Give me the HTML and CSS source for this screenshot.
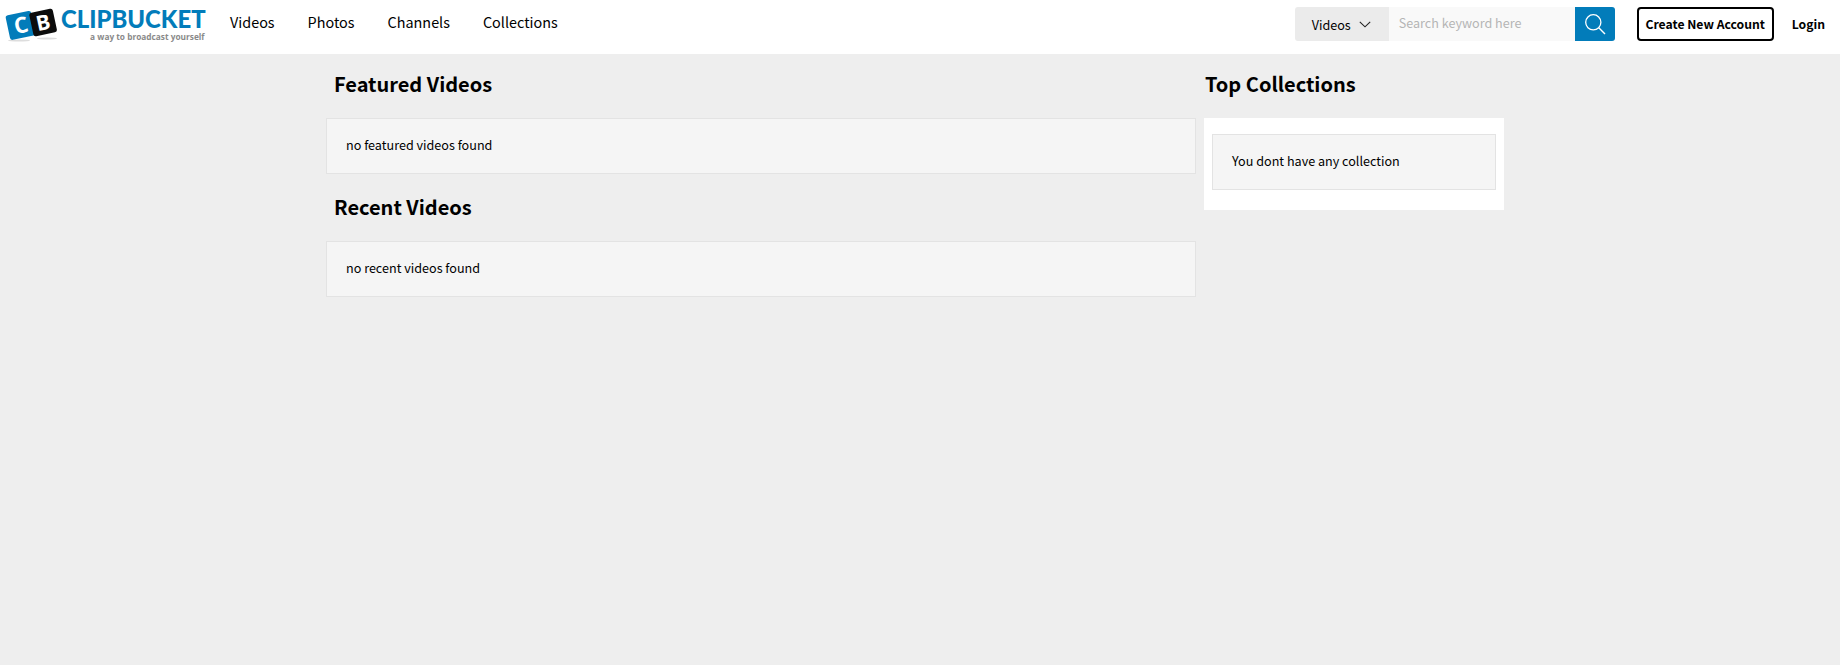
FILE: index.html
```html
<!DOCTYPE html>
<html lang="en">
<head>
<meta charset="utf-8">
<title>ClipBucket</title>
<link rel="stylesheet" href="styles.css">
</head>
<body>
<header class="topbar">
  <a class="logo" href="#">
    <svg class="logo-mark" viewBox="0 0 52 36" width="52" height="36" aria-hidden="true">
      <ellipse cx="14" cy="33.5" rx="11" ry="1" fill="#ddd"/>
      <ellipse cx="42" cy="31.5" rx="10" ry="1" fill="#ddd"/>
      <rect x="2.5" y="6" width="26" height="25" rx="2.5" fill="#027cba" transform="rotate(-12 15 18)"/>
      <rect x="26" y="3.5" width="24" height="24" rx="2.5" fill="#0c0c0c" transform="rotate(-12 38 15)"/>
      <text x="16" y="26" class="mark-letter mark-c" text-anchor="middle" transform="rotate(-12 16 18)">C</text>
      <text x="38" y="23" class="mark-letter mark-b" text-anchor="middle" transform="rotate(-12 38 15)">B</text>
    </svg>
    <span class="logo-text">
      <span class="logo-name">CLIPBUCKET</span>
      <span class="logo-tag">a way to broadcast yourself</span>
    </span>
  </a>
  <nav class="nav">
    <a href="#">Videos</a>
    <a href="#">Photos</a>
    <a href="#">Channels</a>
    <a href="#">Collections</a>
  </nav>
  <form class="search">
    <div class="search-type">
      <span>Videos</span>
      <svg viewBox="0 0 12 7" width="12" height="7" aria-hidden="true"><path d="M.8.8 6 5.8 11.2.8" fill="none" stroke="#222" stroke-width="1.1"/></svg>
    </div>
    <div class="search-input">Search keyword here</div>
    <button class="search-btn" type="button" aria-label="Search">
      <svg viewBox="0 0 22 22" width="22" height="22" aria-hidden="true"><circle cx="9.3" cy="9.3" r="7.6" fill="none" stroke="#fff" stroke-width="1.3"/><path d="M14.8 14.8 21 21" fill="none" stroke="#fff" stroke-width="1.4"/></svg>
    </button>
  </form>
  <a class="btn-create" href="#">Create New Account</a>
  <a class="login" href="#">Login</a>
</header>
<main class="page">
  <section class="col-main">
    <h2>Featured Videos</h2>
    <div class="notice">no featured videos found</div>
    <h2 class="next">Recent Videos</h2>
    <div class="notice">no recent videos found</div>
  </section>
  <aside class="col-side">
    <h2>Top Collections</h2>
    <div class="side-card">
      <div class="notice">You dont have any collection</div>
    </div>
  </aside>
</main>
</body>
</html>
```

FILE: styles.css
```css
* { box-sizing: border-box; }
html, body { margin: 0; height: 100%; }
body {
  background: #eee;
  color: #000;
  font-family: "Noto Sans CJK JP", "Noto Sans", sans-serif;
  font-size: 12.6px;
}
a { color: inherit; text-decoration: none; }

.topbar {
  display: flex;
  align-items: center;
  height: 54px;
  background: #fff;
  padding: 0 15px 0 5px;
}
.logo { display: flex; align-items: flex-start; width: 225px; height: 36px; margin-bottom: 4px; }
.logo-mark { flex: none; }
.logo-text { display: flex; flex-direction: column; align-items: flex-end; margin-left: 4px; }
.logo-name {
  font-family: "Lato", sans-serif;
  font-weight: 900;
  font-size: 23.9px;
  line-height: 24px;
  color: #027cba;
}
.logo-tag {
  font-family: "Open Sans", sans-serif;
  font-weight: 700;
  font-size: 8.3px;
  line-height: 11px;
  margin-right: 1px;
  color: #8a8a8a;
}
.mark-letter { font-family: "Open Sans", sans-serif; font-weight: 700; fill: #fff; }
.mark-c { font-size: 22px; }
.mark-b { font-size: 21px; }

.nav { display: flex; gap: 33px; font-size: 14.4px; line-height: 24px; margin-bottom: 10px; }

.search {
  display: flex;
  height: 34px;
  margin-left: auto;
  margin-bottom: 6px;
  border-radius: 3px;
  overflow: hidden;
}
.search-type {
  display: flex;
  align-items: center;
  gap: 8px;
  width: 94px;
  padding-left: 17px;
  background: #ebebeb;
}
.search-input {
  display: flex;
  align-items: center;
  width: 186px;
  padding: 0 0 3px 10px;
  background: #f9f9f9;
  color: #b5b5b5;
}
.search-btn {
  display: flex;
  align-items: center;
  justify-content: center;
  width: 40px;
  border: 0;
  padding: 0;
  background: #027cba;
}
.btn-create {
  display: flex;
  align-items: center;
  justify-content: center;
  width: 137px;
  height: 34px;
  margin: 0 0 6px 22px;
  border: 2px solid #000;
  border-radius: 4px;
  font-size: 12.2px;
  font-weight: 700;
}
.login { margin: 0 0 6px 18px; font-size: 12.2px; font-weight: 700; }

.page {
  display: grid;
  grid-template-columns: 870px 300px;
  column-gap: 8px;
  width: 1188px;
  margin: 0 auto;
  padding-top: 15px;
}
h2 {
  margin: 0;
  padding-left: 8px;
  font-size: 20px;
  font-weight: 700;
  line-height: 30px;
  height: 49px;
}
.col-side h2 { padding-left: 1px; }
h2.next { margin-top: 18px; }
.notice {
  height: 56px;
  padding: 0 19px 3px;
  display: flex;
  align-items: center;
  background: #f5f5f5;
  border: 1px solid #e3e3e3;
}
.side-card {
  background: #fff;
  padding: 16px 8px 20px;
}
```
